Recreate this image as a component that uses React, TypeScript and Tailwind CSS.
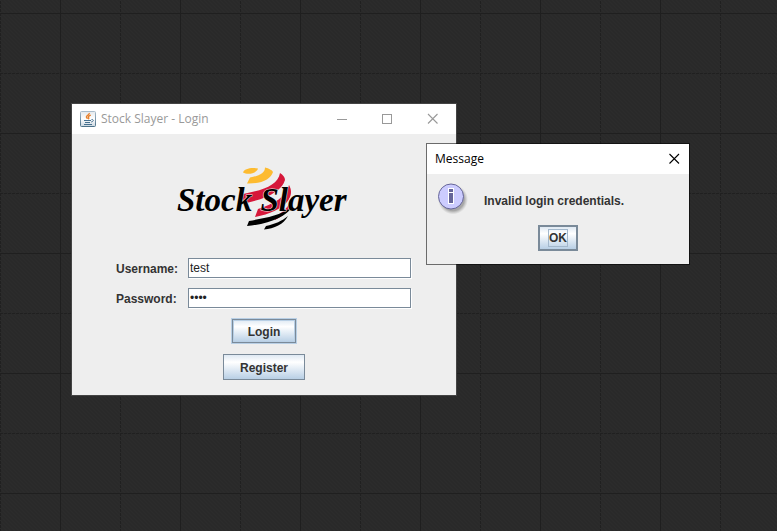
import { useState } from "react";

function Backdrop() {
  return (
    <svg className="absolute inset-0 h-full w-full" aria-hidden="true" shapeRendering="crispEdges">
      <defs>
        <pattern id="weave" width="4" height="4" patternUnits="userSpaceOnUse">
          <rect width="4" height="4" fill="#2a2a2a" />
          <path d="M0 0h1v1H0zM1 1h1v1H1zM2 2h1v1H2zM3 3h1v1H3z" fill="#2c2c2c" />
          <path d="M2 0h1v1H2zM3 1h1v1H3zM0 2h1v1H0zM1 3h1v1H1z" fill="#292929" />
        </pattern>
        <pattern id="grid" y="13" width="120" height="120" patternUnits="userSpaceOnUse">
          <path d="M0 0.5H120M60.5 0V120" stroke="#1f1f1f" />
          <path d="M0 60.5H120M0.5 0V120" stroke="#202020" strokeDasharray="3 1" />
        </pattern>
      </defs>
      <rect width="100%" height="100%" fill="url(#weave)" />
      <rect width="100%" height="100%" fill="url(#grid)" />
    </svg>
  );
}

function JavaIcon() {
  return (
    <svg width="16" height="16" viewBox="0 0 16 16" className="shrink-0" aria-hidden="true">
      <defs>
        <linearGradient id="cupTile" x1="0" y1="0" x2="0" y2="1">
          <stop offset="0" stopColor="#e4e8ec" />
          <stop offset="0.5" stopColor="#ffffff" />
          <stop offset="1" stopColor="#c9d5df" />
        </linearGradient>
        <linearGradient id="cupEdge" x1="0" y1="0" x2="0" y2="1">
          <stop offset="0" stopColor="#a9bccb" />
          <stop offset="1" stopColor="#4d7289" />
        </linearGradient>
      </defs>
      <rect x="0.5" y="0.5" width="15" height="15" rx="1" fill="url(#cupTile)" stroke="url(#cupEdge)" />
      <path d="M9.300 2C9.800 3.800 6 4.600 6.400 6c.2.8.9 1.100 1.100 1.800M10.800 4.200C8.300 5 8 6 8.700 6.800c.4.6 0 1-.4 1.400" fill="none" stroke="#e8812d" strokeWidth="1.400" />
      <path d="M4 9.500h7M5 11.500h5M4 13.500h8M11.500 8.500c2.600-.4 2.400 2-.3 2.500" fill="none" stroke="#47718f" strokeWidth="1" />
    </svg>
  );
}

function Logo() {
  return (
    <svg width="176" height="70" viewBox="0 0 176 70" role="img" aria-label="Stock Slayer" className="block overflow-visible">
      <g fill="#fdbb30">
        <path d="M67 9.500C68 5.500 76 4 82 5.500C81 10 72 12.500 67 9.500Z" />
        <path d="M74 14.500C83 13 89 10 89 4.500C93 5.500 96 7 97 9C95 16 86 21 71 20.500Z" />
      </g>
      <g fill="#d6173a">
        <path d="M67 31C88 27 102 22 104 10C107 12 109 14 109 17C106 28 90 37 64 41Z" />
        <path d="M82 46C98 41 110 34 113 22C116 27 116 33 111 39C105 46 94 51 79 54Z" />
        <path d="M98 54C106 50 112 45 116 36C116 45 109 52 99 57Z" />
      </g>
      <g fill="#000000">
        <path d="M73 58C88 55 104 53 116 44C111 53 94 61 71 63Z" />
        <path d="M90 63C99 61 106 58 112 53C108 61 98 66 88 66.500Z" />
      </g>
      <text
        x="1"
        y="48"
        className="font-['Liberation_Serif',serif] text-[33px] font-bold italic"
        fill="#000000"
        stroke="#eeeeee"
        strokeWidth="1"
        paintOrder="stroke"
      >
        Stock Slayer
      </text>
    </svg>
  );
}

function InfoIcon() {
  return (
    <svg width="32" height="32" viewBox="0 0 32 32" className="shrink-0" aria-hidden="true">
      <defs>
        <radialGradient id="infoShade">
          <stop offset="0.75" stopColor="#777777" stopOpacity="0.600" />
          <stop offset="1" stopColor="#999999" stopOpacity="0" />
        </radialGradient>
      </defs>
      <circle cx="16" cy="16.500" r="15" fill="url(#infoShade)" />
      <circle cx="14" cy="13.500" r="12.500" fill="#ccccff" stroke="#666699" />
      <path d="M11 5h6v5h-6zM11 9h6v12h-6z" fill="#ffffff" />
      <path d="M12 6h4v3h-4zM12 10h4v10h-4z" fill="#666699" />
    </svg>
  );
}

const field =
  "block h-5 w-full border border-[#7a8a99] bg-white px-px font-['Liberation_Sans',Arial,sans-serif] text-xs font-normal text-[#222222] shadow-[1px_1px_0_#ffffff] outline-none";
const metal =
  "bg-linear-to-b from-[#dfe9f3] via-white via-30% to-[#b8cfe5] text-xs font-bold text-[#333333] outline-none";

export default function App() {
  const [username, setUsername] = useState("test");
  const [password, setPassword] = useState("test");

  return (
    <main className="relative min-h-screen overflow-hidden bg-[#2a2a2a] font-['Liberation_Sans',Arial,sans-serif] text-xs">
      <Backdrop />

      <section aria-label="Stock Slayer - Login" className="absolute top-[103px] left-[71px] w-[386px] border border-[#444444] bg-[#eeeeee]">
        <header className="flex h-[30px] items-center bg-white pl-2 text-[#999999]">
          <JavaIcon />
          <h1 className="ml-[5px] flex-1 font-['Open_Sans','Noto_Sans',sans-serif] text-xs">Stock Slayer - Login</h1>
          <button type="button" aria-label="Minimize" className="flex h-full w-[45px] items-center justify-center">
            <svg width="11" height="11" shapeRendering="crispEdges"><path d="M0 5.500h10" stroke="currentColor" /></svg>
          </button>
          <button type="button" aria-label="Maximize" className="flex h-full w-[45px] items-center justify-center">
            <svg width="11" height="11" shapeRendering="crispEdges"><path d="M.5.5h9v9h-9z" fill="none" stroke="currentColor" /></svg>
          </button>
          <button type="button" aria-label="Close" className="flex h-full w-[46px] items-center justify-center">
            <svg width="12" height="12"><path d="M1 1l9.500 9.500M10.500 1l-9.500 9.500" stroke="currentColor" strokeWidth="1.100" /></svg>
          </button>
        </header>

        <form className="flex flex-col items-center pb-[15px]" onSubmit={(e) => e.preventDefault()}>
          <div className="mt-[29px]"><Logo /></div>
          <div className="mt-[25px] grid w-full grid-cols-[72px_1fr] items-center gap-y-[10px] pr-[45px] pl-11 font-bold text-[#333333]">
            <label htmlFor="username" className="pt-0.5">Username:</label>
            <input id="username" className={field} value={username} onChange={(e) => setUsername(e.target.value)} />
            <label htmlFor="password" className="pt-0.5">Password:</label>
            <input id="password" type="password" className={field} value={password} onChange={(e) => setPassword(e.target.value)} />
          </div>
          <button type="submit" className={`${metal} mt-[11px] h-6 w-16 border border-[#7a8a99] pt-px ring-1 ring-[#b8cfe5] inset-ring-1 inset-ring-[#b8cfe5]`}>Login</button>
          <button type="button" className={`${metal} mt-[11px] h-[26px] w-[82px] border border-[#7a8a99] pt-px`}>Register</button>
        </form>
      </section>

      <section role="dialog" aria-label="Message" className="absolute top-[143px] left-[426px] w-[264px] border border-black/55 bg-[#eeeeee] bg-clip-padding">
        <header className="flex h-[30px] items-center justify-between bg-white pl-2 text-black">
          <h2 className="font-['Open_Sans','Noto_Sans',sans-serif] text-xs">Message</h2>
          <button type="button" aria-label="Close" className="flex h-full w-[31px] items-center justify-center">
            <svg width="12" height="12"><path d="M1.500 1l9.500 9.500M11 1l-9.500 9.500" stroke="currentColor" strokeWidth="1.100" /></svg>
          </button>
        </header>
        <div className="flex flex-col items-center pt-[9px] pb-[13px]">
          <div className="flex w-full items-center gap-[15px] pl-[10px] font-bold text-[#333333]">
            <InfoIcon />
            <p className="pt-[3px]">Invalid login credentials.</p>
          </div>
          <button type="button" className={`${metal} mt-[10px] flex h-[26px] w-10 items-center justify-center border-2 border-[#7a8a99]`}>
            <span className="border border-[#a3b8cc] leading-4">OK</span>
          </button>
        </div>
      </section>
    </main>
  );
}
